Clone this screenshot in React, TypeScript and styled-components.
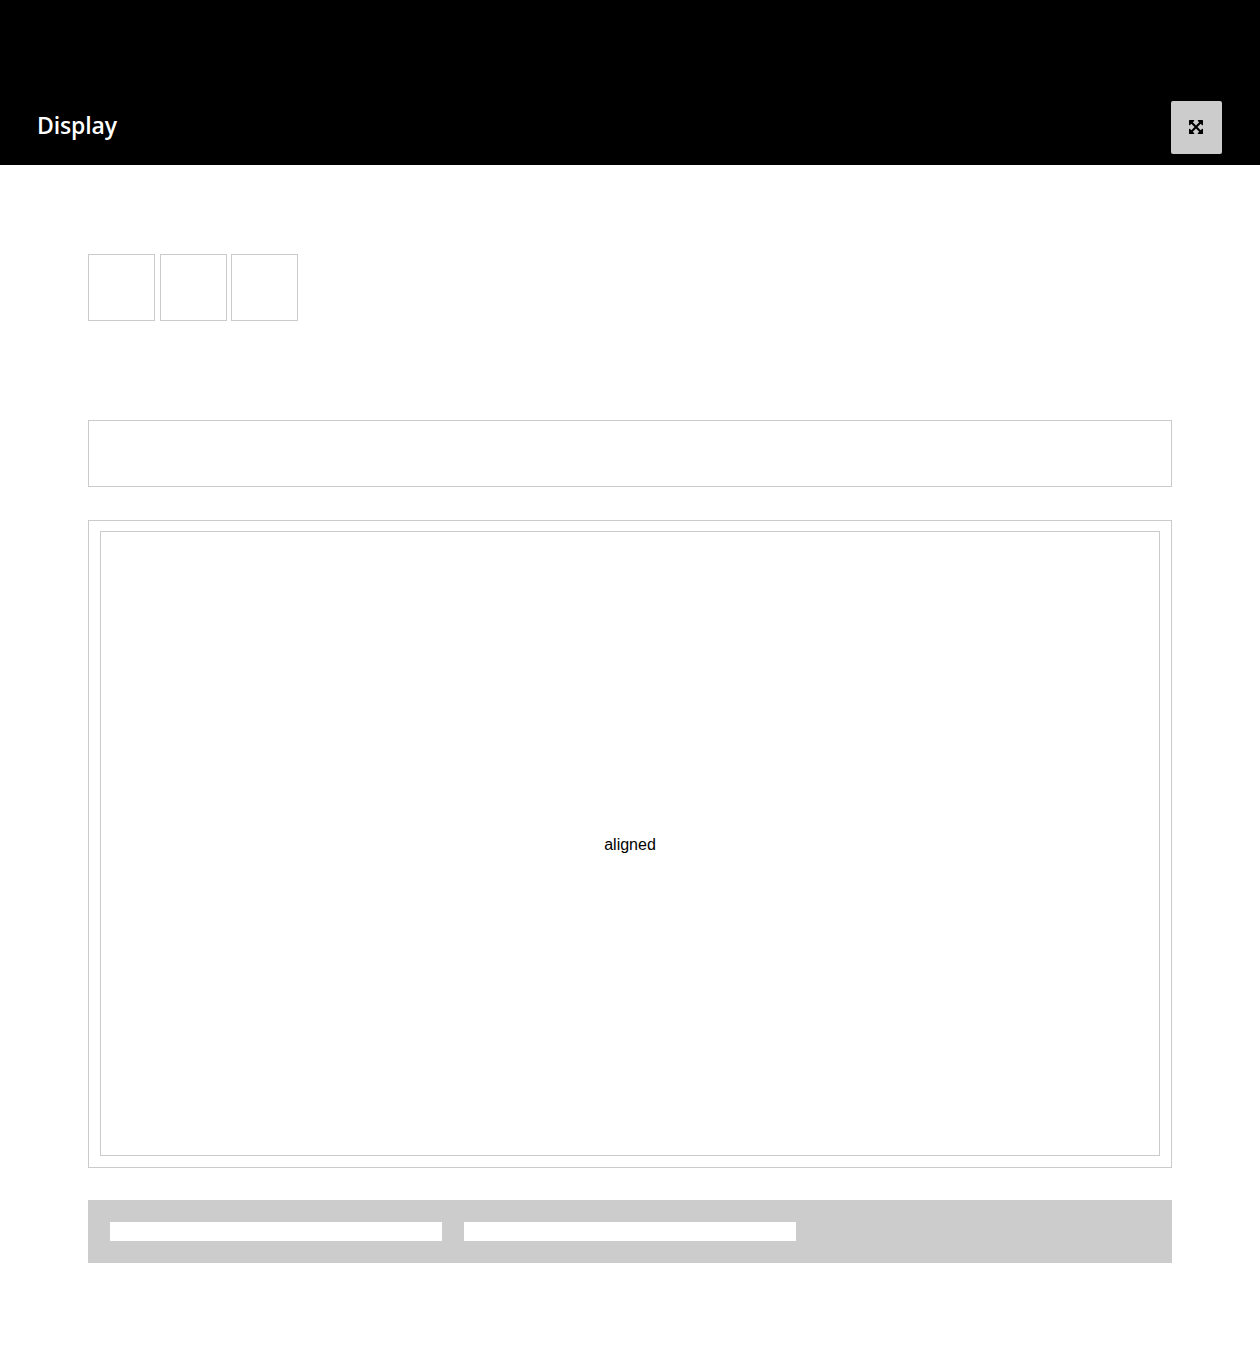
import React from "react";
import styled, { createGlobalStyle } from "styled-components";

const line = "#cbcbcb";

const GlobalStyle = createGlobalStyle`
  *, *::before, *::after { box-sizing: border-box; }
  body {
    margin: 0;
    background: #fff;
    color: #000;
    font-family: "Liberation Sans", Arial, sans-serif;
    font-size: 16px;
  }
`;

const Page = styled.div`
  display: flex;
  flex-direction: column;
  min-height: 1351px;
`;

const Header = styled.header`
  display: flex;
  align-items: flex-end;
  justify-content: space-between;
  height: 165px;
  padding: 0 38px 11px;
  background: #000;
`;

const Title = styled.h1`
  margin: 0 0 14px -1px;
  color: #fff;
  font-family: "Open Sans", "Noto Sans", sans-serif;
  font-size: 23px;
  font-weight: 600;
  line-height: 30px;
  letter-spacing: -0.15px;
`;

const ExpandButton = styled.button`
  display: flex;
  align-items: center;
  justify-content: center;
  width: 51px;
  height: 53px;
  padding: 0 2px 1px 0;
  border: 0;
  border-radius: 2px;
  background: #ccc;
  color: #000;
`;

const ExpandIcon = styled.svg`
  display: block;
  width: 14px;
  height: 14px;
  fill: currentColor;
`;

const Content = styled.main`
  display: flex;
  flex-direction: column;
  padding: 89px 88px 88px;
`;

const InlineRow = styled.div`
  display: grid;
  grid-template-columns: repeat(3, 67px);
  column-gap: 4.5px;
  margin-bottom: 99px;
`;

const Box = styled.div`
  height: 67px;
  border: 1px solid ${line};
`;

const Frame = styled.section`
  display: flex;
  height: 648px;
  margin: 33px 0 32px;
  padding: 10px 11px 11px;
  border: 1px solid ${line};
`;

const AlignedCell = styled.div`
  display: flex;
  flex: 1;
  align-items: center;
  justify-content: center;
  padding-top: 3px;
  border: 1px solid ${line};
  line-height: 22px;
`;

const Columns = styled.section`
  display: flex;
  gap: 22px;
  height: 63px;
  padding: 22px;
  background: #ccc;
`;

const Column = styled.div`
  width: 332px;
  height: 19px;
  background: #fff;
`;

export default function App() {
  return (
    <Page>
      <GlobalStyle />
      <Header>
        <Title>Display</Title>
        <ExpandButton type="button" aria-label="Expand">
          <ExpandIcon viewBox="128 128 1536 1536">
            <path d="M1411 541l-355 355 355 355 144-144q29-31 70-14 39 17 39 59v448q0 26-19 45t-45 19h-448q-42 0-59-40-17-39 14-69l144-144-355-355-355 355 144 144q31 30 14 69-17 40-59 40h-448q-26 0-45-19t-19-45v-448q0-42 40-59 39-17 69 14l144 144 355-355-355-355-144 144q-19 19-45 19-12 0-24-5-40-17-40-59v-448q0-26 19-45t45-19h448q42 0 59 40 17 39-14 69l-144 144 355 355 355-355-144-144q-31-30-14-69 17-40 59-40h448q26 0 45 19t19 45v448q0 42-39 59-13 5-25 5-26 0-45-19z" />
          </ExpandIcon>
        </ExpandButton>
      </Header>
      <Content>
        <InlineRow>
          <Box />
          <Box />
          <Box />
        </InlineRow>
        <Box />
        <Frame>
          <AlignedCell>aligned</AlignedCell>
        </Frame>
        <Columns>
          <Column />
          <Column />
        </Columns>
      </Content>
    </Page>
  );
}
